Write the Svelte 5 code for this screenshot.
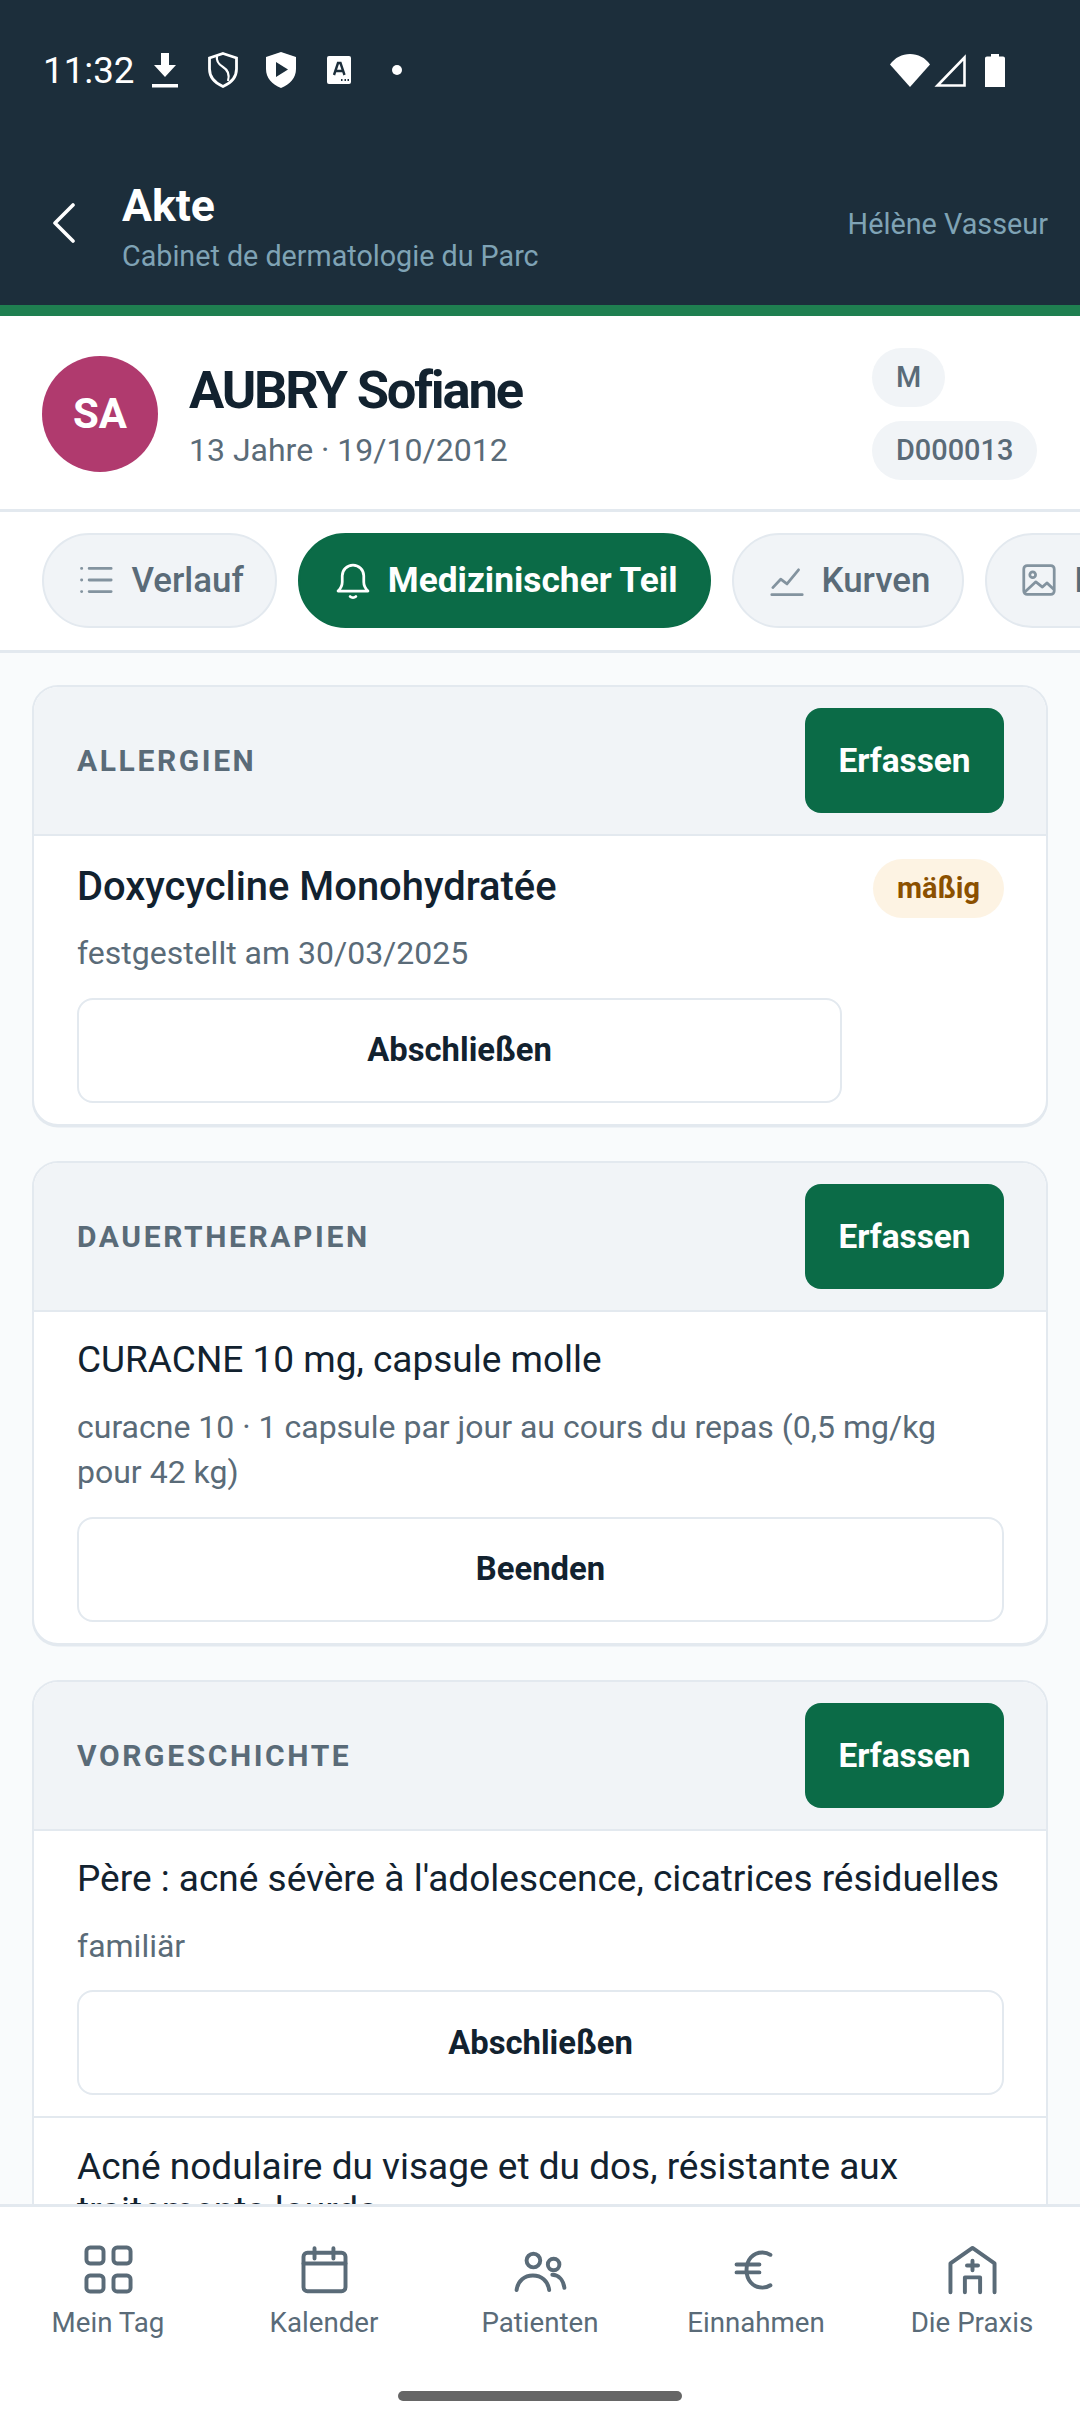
<script>
  const tabs = [
    { label: 'Verlauf', icon: 'list' },
    { label: 'Medizinischer Teil', icon: 'bell', active: true },
    { label: 'Kurven', icon: 'chart' },
    { label: 'Bilder', icon: 'image' }
  ];

  const sections = [
    {
      title: 'Allergien',
      rows: [
        {
          name: 'Doxycycline Monohydratée',
          strong: true,
          badge: 'mäßig',
          lines: 'festgestellt am 30/03/2025',
          action: 'Abschließen'
        }
      ]
    },
    {
      title: 'Dauertherapien',
      rows: [
        {
          name: 'CURACNE 10 mg, capsule molle',
          lines: 'curacne 10 · 1 capsule par jour au cours du repas (0,5 mg/kg pour 42 kg)',
          action: 'Beenden'
        }
      ]
    },
    {
      title: 'Vorgeschichte',
      rows: [
        {
          name: "Père : acné sévère à l'adolescence, cicatrices résiduelles",
          lines: 'familiär',
          action: 'Abschließen'
        },
        {
          name: 'Acné nodulaire du visage et du dos, résistante aux traitements lourds',
          lines: 'persönlich',
          action: 'Abschließen'
        }
      ]
    }
  ];

  const nav = [
    { label: 'Mein Tag', icon: 'grid' },
    { label: 'Kalender', icon: 'calendar' },
    { label: 'Patienten', icon: 'people' },
    { label: 'Einnahmen', icon: 'euro' },
    { label: 'Die Praxis', icon: 'house' }
  ];
</script>

{#snippet tabIcon(name)}
  <svg class="tab-icon" viewBox="0 0 16 16" fill="none" stroke="currentColor" stroke-width="1.05" stroke-linecap="round" stroke-linejoin="round">
    {#if name === 'list'}
      <path d="M5 3.6h8.4M5 8h8.4M5 12.4h8.4" />
      <path d="M2.1 3.6h.1M2.1 8h.1M2.1 12.4h.1" />
    {:else if name === 'bell'}
      <path d="M2.3 12.2c.9-.8 1.6-1.6 1.6-3.4V6.4a4.1 4.1 0 0 1 8.2 0v2.4c0 1.8.7 2.6 1.6 3.4z" />
      <path d="M6.9 14.3c.6.5 1.6.5 2.2 0" />
    {:else if name === 'chart'}
      <path d="M2.2 13.6h11.6" />
      <path d="M2.6 10.9l3-3.2 2.4 1.8 4.4-5.4" />
    {:else}
      <rect x="2.2" y="2.5" width="11.6" height="11" rx="1.3" />
      <circle cx="5.6" cy="6" r="1.1" />
      <path d="M2.6 12.6l4.2-3.9 2.5 2 1.7-1.6 2.6 2.4" />
    {/if}
  </svg>
{/snippet}

{#snippet navIcon(name)}
  <svg class="nav-icon" viewBox="0 0 24 24" fill="none" stroke="currentColor" stroke-width="1.5" stroke-linecap="round" stroke-linejoin="round">
    {#if name === 'grid'}
      <rect x="3.6" y="3.6" width="6.500" height="6.100" rx="1.400" />
      <rect x="13.9" y="3.6" width="6.500" height="6.100" rx="1.400" />
      <rect x="3.6" y="14.300" width="6.500" height="6.100" rx="1.400" />
      <rect x="13.9" y="14.300" width="6.500" height="6.100" rx="1.400" />
    {:else if name === 'calendar'}
      <rect x="4" y="5.600" width="16" height="14.700" rx="1.500" />
      <path d="M4 9.700h16M8.200 3.900v3.900M15.400 3.900v3.900" />
    {:else if name === 'people'}
      <circle cx="9.300" cy="8.600" r="2.600" />
      <path d="M2.900 19.800c.5-3.500 3-5.500 6.200-5.500s5.700 2 6.200 5.500" />
      <circle cx="17" cy="10.100" r="2.200" />
      <path d="M16.500 14c2.500.1 4.200 2 4.600 5" />
    {:else if name === 'euro'}
      <path d="M17.300 6.400c-.9-.6-1.900-.9-3-.9-3.800 0-6.100 2.900-6.100 6.700s2.300 6.700 6.100 6.700c1.100 0 2.100-.3 3-.9" />
      <path d="M4.400 10.100h8.700M4.400 13.100h8.700" />
    {:else}
      <path d="M3.600 20.700V9.700L12 3.800l8.400 5.900v11" />
      <path d="M12 8.700v3.600M9.900 10.500h4.200" />
      <path d="M9.100 20.700V15h5.800v5.700" />
    {/if}
  </svg>
{/snippet}

<div class="screen">
  <header class="top">
    <div class="statusbar">
      <span class="time">11:32</span>
      <span class="slot">
        <svg width="26" height="35" viewBox="0 0 26 35" fill="#fff"><path d="M9 0h8v12h7L13 24 2 12h7zM0 31h26v3.500H0z" /></svg>
      </span>
      <span class="slot">
        <svg width="30" height="36" viewBox="0 0 30 36" fill="none" stroke="#fff"><path stroke-width="2.800" d="M15 1.500 28.500 6v11c0 8-5.500 14-13.500 17.500C7 31 1.500 25 1.500 17V6z" /><path stroke-width="2.200" d="M9 4c-1 5 1 8 6 11 5 3 7 7 5 14" /></svg>
      </span>
      <span class="slot">
        <svg width="30" height="36" viewBox="0 0 30 36"><path fill="#fff" fill-rule="evenodd" d="M15 0 30 5v12c0 9-6 15.500-15 19C6 32.500 0 26 0 17V5zM10 10v15l12-7.500z" /></svg>
      </span>
      <span class="slot">
        <svg width="24" height="28" viewBox="0 0 24 28"><rect width="24" height="28" rx="2" fill="#fff" /><path d="M7 19 11 7h2.500l4 12M8.500 15h7" fill="none" stroke="#1c2e3b" stroke-width="2.400" /><path d="M14 24h1.500M17.500 24h1.500M20.500 24H22" stroke="#1c2e3b" stroke-width="2" /></svg>
      </span>
      <span class="slot"><i class="dot"></i></span>
      <span class="status-right">
        <svg width="40" height="33" viewBox="0 0 40 33"><path fill="#fff" d="M0 10.500C5 3.500 12 0 20 0s15 3.500 20 10.500L20 33z" /></svg>
        <svg width="32" height="33" viewBox="0 0 32 33" fill="none"><path stroke="#fff" stroke-width="2.600" d="M30.500 3.500V31.500H3.500z" /></svg>
        <svg class="battery" width="20" height="33" viewBox="0 0 20 33"><path fill="#fff" d="M6 0h8v2.500h4c1.200 0 2 .8 2 2V33H0V4.500c0-1.200.8-2 2-2h4z" /></svg>
      </span>
    </div>
    <div class="appbar">
      <svg class="back" width="24" height="40" viewBox="0 0 24 40" fill="none" stroke="#fff" stroke-width="3.600" stroke-linecap="round" stroke-linejoin="round"><path d="M21 2 3 20l18 18" /></svg>
      <div class="appbar-titles">
        <div class="title">Akte</div>
        <div class="subtitle">Cabinet de dermatologie du Parc</div>
      </div>
      <div class="user">Hélène Vasseur</div>
    </div>
  </header>

  <section class="patient">
    <div class="avatar">SA</div>
    <div class="patient-info">
      <div class="patient-name">AUBRY Sofiane</div>
      <div class="patient-meta">13 Jahre · 19/10/2012</div>
    </div>
    <div class="chips">
      <span class="chip">M</span>
      <span class="chip">D000013</span>
    </div>
  </section>

  <nav class="tabs">
    {#each tabs as tab}
      <div class="tab" class:active={tab.active}>
        {@render tabIcon(tab.icon)}
        <span>{tab.label}</span>
      </div>
    {/each}
  </nav>

  <main class="content">
    {#each sections as section}
      <section class="card">
        <div class="card-head">
          <span class="card-title">{section.title}</span>
          <button class="add">Erfassen</button>
        </div>
        {#each section.rows as row}
          <div class="row">
            <div class="row-main">
              <div class="row-name" class:strong={row.strong}>{row.name}</div>
              <div class="row-sub">{row.lines}</div>
              <button class="action">{row.action}</button>
            </div>
            {#if row.badge}
              <span class="severity">{row.badge}</span>
            {/if}
          </div>
        {/each}
      </section>
    {/each}
  </main>

  <footer class="bottom">
    <div class="nav-items">
      {#each nav as item}
        <div class="nav-item">
          {@render navIcon(item.icon)}
          <span>{item.label}</span>
        </div>
      {/each}
    </div>
    <div class="home-pill"></div>
  </footer>
</div>

<style>
  :global(body) {
    margin: 0;
    background: #fff;
  }
  .screen {
    width: 1080px;
    height: 2424px;
    display: flex;
    flex-direction: column;
    overflow: hidden;
    font-family: Roboto, "Liberation Sans", sans-serif;
    color: #12222f;
  }

  .top {
    background: #1c2e3b;
    border-bottom: 11px solid #1f7f50;
    flex: none;
  }
  .statusbar {
    height: 140px;
    display: flex;
    align-items: center;
    padding: 0 75px 0 43px;
    color: #fff;
  }
  .time {
    font-size: 36.75px;
    width: 93px;
  }
  .slot {
    width: 58px;
    display: flex;
    justify-content: center;
  }
  .dot {
    width: 10px;
    height: 10px;
    border-radius: 50%;
    background: #fff;
  }
  .status-right {
    margin-left: auto;
    display: flex;
    align-items: center;
    gap: 4px;
  }
  .battery {
    margin-left: 15px;
  }
  .appbar {
    height: 165px;
    display: flex;
    align-items: center;
    padding: 0 32px 0 52px;
  }
  .back {
    margin-right: 46px;
  }
  .appbar-titles {
    flex: 1;
    margin-top: 10px;
  }
  .title {
    font-size: 44.6px;
    font-weight: 700;
    line-height: 56px;
    color: #fff;
  }
  .subtitle {
    font-size: 28.7px;
    line-height: 44px;
    color: #7fa3b5;
  }
  .user {
    margin-top: 3px;
    font-size: 28.8px;
    color: #7fa3b5;
  }

  .patient {
    flex: none;
    height: 196px;
    box-sizing: border-box;
    display: flex;
    align-items: center;
    padding: 2px 42px 0;
    background: #fff;
    border-bottom: 3px solid #e3e9ef;
  }
  .avatar {
    width: 116px;
    height: 116px;
    border-radius: 50%;
    background: #b03a6e;
    color: #fff;
    font-size: 42px;
    font-weight: 700;
    display: flex;
    align-items: center;
    justify-content: center;
    margin-right: 31px;
  }
  .patient-info {
    flex: 1;
    padding-top: 4px;
  }
  .patient-name {
    font-size: 52.5px;
    font-weight: 700;
    letter-spacing: -2.2px;
    line-height: 60px;
    color: #12222f;
  }
  .patient-meta {
    font-size: 32px;
    line-height: 44px;
    margin-top: 8px;
    color: #5a6b78;
  }
  .chips {
    width: 166px;
    display: flex;
    flex-direction: column;
    align-items: flex-start;
    gap: 14px;
  }
  .chip {
    height: 59px;
    padding: 0 24px;
    border-radius: 30px;
    background: #f1f4f7;
    color: #5a6b78;
    font-size: 28.9px;
    font-weight: 500;
    display: flex;
    align-items: center;
  }

  .tabs {
    flex: none;
    height: 141px;
    box-sizing: border-box;
    display: flex;
    align-items: center;
    gap: 21px;
    padding: 0 0 2px 42px;
    background: #fff;
    border-bottom: 3px solid #e3e9ef;
    overflow: hidden;
  }
  .tab {
    flex: none;
    height: 95px;
    box-sizing: border-box;
    display: flex;
    align-items: center;
    gap: 14px;
    padding: 0 31.5px;
    border: 2.6px solid #e3e9ef;
    border-radius: 48px;
    background: #f1f4f7;
    color: #5a6b78;
    font-size: 34.9px;
    font-weight: 500;
  }
  .tab.active {
    background: #0b6b47;
    border-color: #0b6b47;
    color: #fff;
    font-size: 35.3px;
    font-weight: 700;
  }
  .tab-icon {
    width: 42px;
    height: 42px;
    color: #83939f;
  }
  .tab.active .tab-icon {
    color: #fff;
  }

  .content {
    flex: 1;
    min-height: 0;
    overflow: hidden;
    background: #f9fbfc;
    padding: 32px 32px 0;
    display: flex;
    flex-direction: column;
    gap: 35px;
  }
  .card {
    flex: none;
    background: #fff;
    border: 2.6px solid #e3e9ef;
    border-radius: 26px;
    box-shadow: 0 1.5px 0 #e3e9ef;
    overflow: hidden;
  }
  .card-head {
    display: flex;
    align-items: center;
    justify-content: space-between;
    padding: 21px 42px 21px 43px;
    background: #f1f4f7;
    border-bottom: 2.6px solid #e3e9ef;
  }
  .card-title {
    font-size: 30px;
    font-weight: 700;
    letter-spacing: 2.6px;
    text-transform: uppercase;
    color: #5a6b78;
  }
  button {
    font-family: inherit;
    cursor: pointer;
  }
  .add {
    width: 199px;
    height: 105px;
    border: 0;
    border-radius: 16px;
    background: #0b6b47;
    color: #fff;
    font-size: 33.4px;
    font-weight: 700;
  }
  .row {
    display: flex;
    gap: 31px;
    padding: 26.5px 42px 21px 43px;
    border-top: 2.6px solid #e3e9ef;
  }
  .card-head + .row {
    border-top: 0;
  }
  .row-main {
    flex: 1;
    min-width: 0;
  }
  .row-name {
    font-size: 37px;
    line-height: 44.6px;
    color: #12222f;
  }
  .row-name.strong {
    margin-top: 2px;
    font-size: 39.9px;
    font-weight: 500;
  }
  .row-sub {
    margin-top: 22px;
    font-size: 32px;
    line-height: 45.5px;
    color: #5a6b78;
  }
  .action {
    display: block;
    width: 100%;
    height: 105px;
    margin-top: 21px;
    background: #fff;
    border: 2.6px solid #e3e9ef;
    border-radius: 16px;
    color: #12222f;
    font-size: 32.8px;
    font-weight: 700;
  }
  .severity {
    flex: none;
    height: 59px;
    padding: 0 24px;
    margin-top: -4px;
    border-radius: 30px;
    background: #fdf3e3;
    color: #8b5000;
    font-size: 28.9px;
    font-weight: 700;
    display: flex;
    align-items: center;
  }

  .bottom {
    flex: none;
    height: 220px;
    box-sizing: border-box;
    background: #fff;
    border-top: 3px solid #e3e9ef;
    position: relative;
  }
  .nav-items {
    display: grid;
    grid-template-columns: repeat(5, 1fr);
    padding-top: 31px;
  }
  .nav-item {
    display: flex;
    flex-direction: column;
    align-items: center;
    gap: 5px;
    color: #5a6b78;
    font-size: 27.7px;
  }
  .nav-icon {
    width: 63px;
    height: 63px;
  }
  .home-pill {
    position: absolute;
    left: 398px;
    width: 284px;
    top: 184px;
    height: 10px;
    border-radius: 5px;
    background: #666;
  }
</style>
